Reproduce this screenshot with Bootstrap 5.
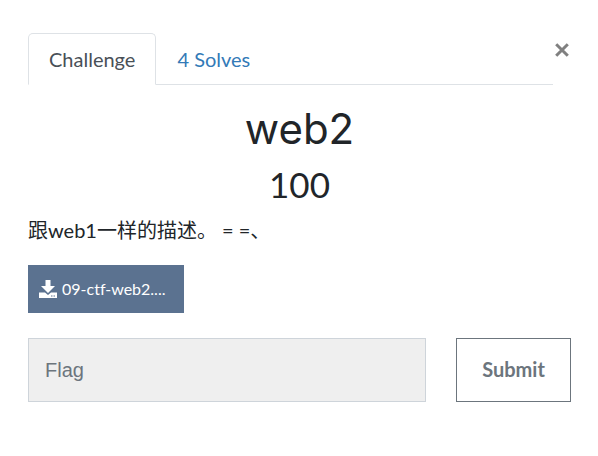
<!DOCTYPE html>
<html lang="zh-CN">
<head>
<meta charset="utf-8">
<meta name="viewport" content="width=device-width, initial-scale=1">
<title>web2</title>
<link href="https://cdn.jsdelivr.net/npm/bootstrap@5.3.0/dist/css/bootstrap.min.css" rel="stylesheet">
<style>
body { font-family: Lato, "Noto Sans CJK SC", sans-serif; font-size: 20px; line-height: 30px; color: #212529; background: #fff; }
.challenge { padding: 33px 27px 32px 28px; }
.challenge-tabs { --bs-nav-tabs-border-color: #dee2e6; --bs-nav-link-color: #337ab7; --bs-nav-tabs-border-radius: 5px; --bs-nav-tabs-link-active-color: #495057; }
.challenge-tabs .nav-link { padding: 10px 20px; font-size: 20px; }
.dismiss { width: 18px; padding: 10px 2px; color: #808080; line-height: 0; }
.challenge-name { margin: 20px 0 10px; font-family: Inter, sans-serif; font-size: 42px; line-height: 48px; font-weight: 400; }
.challenge-value { font-size: 35px; line-height: 42px; font-weight: 400; margin-bottom: 10px; }
.challenge-text { margin-bottom: 20px; }
.download { width: 156px; height: 48px; padding: 0 10px; margin-bottom: 25px; font-size: 16px; font-variant-ligatures: none; color: #fff; background: #5b7290; --bs-btn-hover-color: #fff; --bs-btn-hover-bg: #4b6080; }
.flag { height: 64px; padding: 0 16px; font-family: "Liberation Sans", sans-serif; font-size: 20px; line-height: 30px; background: #efefef; border-color: #ced4da; }
.flag::placeholder { color: #6c757d; }
.send { width: 115px; padding: 0 0 2px; font-size: 20px; }
.answer { gap: 30px; }
</style>
<script defer src="https://cdn.jsdelivr.net/npm/bootstrap@5.3.0/dist/js/bootstrap.bundle.min.js"></script>
</head>
<body>
<main class="challenge">
  <header class="d-flex align-items-start">
    <ul class="nav nav-tabs challenge-tabs flex-grow-1" role="tablist">
      <li class="nav-item" role="presentation"><button class="nav-link active" id="challenge-tab" type="button" role="tab" data-bs-toggle="tab" data-bs-target="#challenge" aria-controls="challenge" aria-selected="true">Challenge</button></li>
      <li class="nav-item" role="presentation"><button class="nav-link" id="solves-tab" type="button" role="tab" data-bs-toggle="tab" data-bs-target="#solves" aria-controls="solves" aria-selected="false">4 Solves</button></li>
    </ul>
    <button class="btn dismiss border-0 rounded-0" type="button" aria-label="Close">
      <svg width="14" height="14" viewBox="0 0 14 14" aria-hidden="true"><path d="M1.2 1.2 12.8 12.8M12.8 1.2 1.2 12.8" fill="none" stroke="currentColor" stroke-width="3"/></svg>
    </button>
  </header>
  <div class="tab-content">
    <section class="tab-pane active" id="challenge" role="tabpanel" aria-labelledby="challenge-tab">
      <h2 class="challenge-name text-center">web2</h2>
      <h3 class="challenge-value text-center">100</h3>
      <p class="challenge-text">跟web1一样的描述。 = =、</p>
      <a class="btn download rounded-0 border-0 d-flex align-items-center justify-content-start gap-1" href="#">
        <svg class="flex-shrink-0" width="20" height="18" viewBox="0 0 20 18" fill="currentColor" aria-hidden="true"><path d="M7.5 0h5v6H17l-7 7-7-7h4.500z"/><path fill-rule="evenodd" d="M1 12.500h6l3 2.500 3-2.500h6V18H1zM13 15.500v1h1.500v-1zm2.500 0v1H17v-1z"/></svg>
        <span>09-ctf-web2....</span>
      </a>
      <form class="d-flex answer">
        <label class="visually-hidden" for="flag">Flag</label>
        <input class="form-control flag rounded-0 flex-grow-1" id="flag" type="text" placeholder="Flag">
        <button class="btn btn-outline-secondary send rounded-0 fw-bold flex-shrink-0" type="submit">Submit</button>
      </form>
    </section>
    <section class="tab-pane" id="solves" role="tabpanel" aria-labelledby="solves-tab"></section>
  </div>
</main>
</body>
</html>
